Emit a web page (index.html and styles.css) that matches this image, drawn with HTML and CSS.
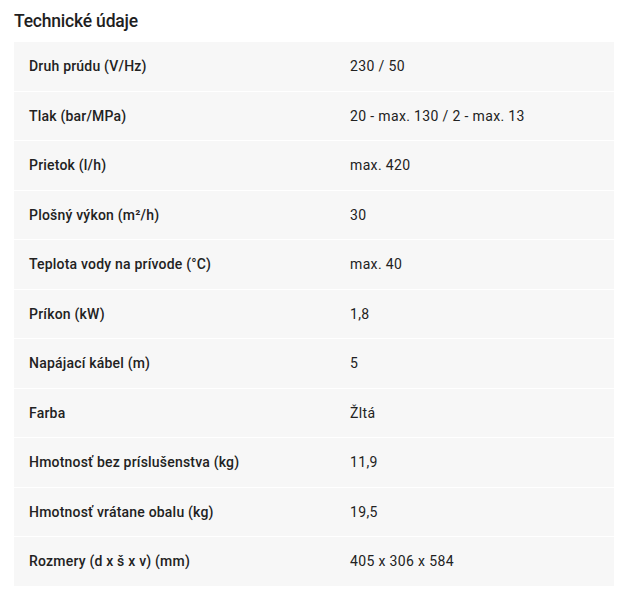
FILE: index.html
```html
<!DOCTYPE html>
<html lang="sk">
<head>
<meta charset="utf-8">
<link rel="stylesheet" href="styles.css">
</head>
<body>
<section class="specs">
  <h2 class="specs-title">Technické údaje</h2>
  <div class="specs-table">
    <div class="row"><div class="label">Druh prúdu (V/Hz)</div><div class="value">230 / 50</div></div>
    <div class="row"><div class="label">Tlak (bar/MPa)</div><div class="value">20 - max. 130 / 2 - max. 13</div></div>
    <div class="row"><div class="label">Prietok (l/h)</div><div class="value">max. 420</div></div>
    <div class="row"><div class="label">Plošný výkon (m²/h)</div><div class="value">30</div></div>
    <div class="row"><div class="label">Teplota vody na prívode (°C)</div><div class="value">max. 40</div></div>
    <div class="row"><div class="label">Príkon (kW)</div><div class="value">1,8</div></div>
    <div class="row"><div class="label">Napájací kábel (m)</div><div class="value">5</div></div>
    <div class="row"><div class="label">Farba</div><div class="value">Žltá</div></div>
    <div class="row"><div class="label">Hmotnosť bez príslušenstva (kg)</div><div class="value">11,9</div></div>
    <div class="row"><div class="label">Hmotnosť vrátane obalu (kg)</div><div class="value">19,5</div></div>
    <div class="row"><div class="label">Rozmery (d x š x v) (mm)</div><div class="value">405 x 306 x 584</div></div>
  </div>
</section>
</body>
</html>
```
FILE: styles.css
```css
html, body {
  margin: 0;
  padding: 0;
  background: #fff;
}
body {
  font-family: Roboto, "Noto Sans", sans-serif;
  color: #222;
}
.specs {
  padding: 10px 12px 0 14px;
}
.specs-title {
  margin: 0 0 10px 0;
  font-size: 17.5px;
  line-height: 22px;
  font-weight: 500;
  letter-spacing: -0.2px;
  color: #1f1f1f;
}
.specs-table {
  display: flex;
  flex-direction: column;
  gap: 1px;
  width: 600px;
}
.row {
  display: grid;
  grid-template-columns: 336px 1fr;
  height: 48.5px;
  align-items: center;
  background: #f7f7f7;
  font-size: 14px;
}
.label {
  padding-left: 15px;
  font-weight: 500;
  letter-spacing: 0.2px;
}
.value {
  font-weight: 400;
  letter-spacing: 0.35px;
}
```
